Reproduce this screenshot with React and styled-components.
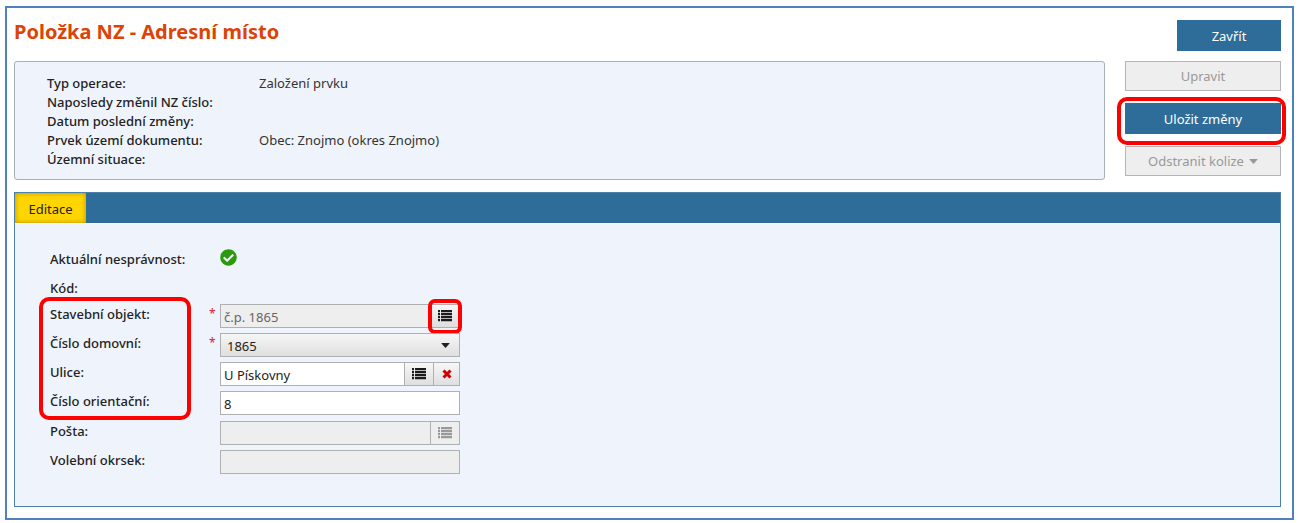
import React from 'react'
import styled, { createGlobalStyle, css } from 'styled-components'
import { FaCheckCircle } from 'react-icons/fa'

const GlobalStyle = createGlobalStyle`
	*, *::before, *::after {
		box-sizing: border-box;
	}
	body {
		margin: 0;
		background: #fff;
		color: #222;
		font: 13px/20px 'Noto Sans', 'Open Sans', sans-serif;
	}
	button, input, select {
		font: inherit;
	}
`

const Frame = styled.main`
	margin: 6px 6px 4px 5px;
	padding: 12px 11px 11px 7px;
	border: 2px solid #4f81bd;
`

const Header = styled.header`
	display: flex;
	justify-content: space-between;
	margin-bottom: 10px;
`

const Title = styled.h1`
	margin: 0;
	color: #dc4405;
	font-size: 20px;
	font-weight: 700;
	line-height: 24px;
`

const Overview = styled.section`
	display: flex;
	gap: 20px;
	margin-bottom: 12px;
`

const Summary = styled.dl`
	flex: 1;
	display: grid;
	grid-template-columns: 212px 1fr;
	grid-auto-rows: 19px;
	margin: 0;
	padding: 12px 32px 10px;
	border: 1px solid #a8b0b8;
	border-radius: 3px;
	background: #eff4fc;
	line-height: 19px;
`

const Term = styled.dt`
	font-weight: 500;
`

const Value = styled.dd`
	margin: 0;
	color: #333;
`

const Actions = styled.div`
	display: flex;
	flex-direction: column;
	gap: 12px;
	width: 156px;
`

/* red marker drawn around the thing being explained */
const marker = css`
	content: '';
	position: absolute;
	border: 4px solid #f00;
	border-radius: 10px;
	pointer-events: none;
`

const Marked = styled.div`
	position: relative;
	display: grid;
	&::after {
		${marker}
		inset: -6px -5px -11px -8px;
	}
`

const Button = styled.button`
	display: flex;
	align-items: center;
	justify-content: center;
	gap: 5px;
	width: ${props => (props.$small ? '104px' : '100%')};
	height: 31px;
	padding: 0;
	border: 1px solid #2e6d99;
	background: #2e6d99;
	color: #fff;
	&:disabled {
		height: 30px;
		border-color: #b5b5b5;
		background: #eee;
		color: #999;
	}
`

const Panel = styled.section`
	border: 1px solid #4a82aa;
	background: #eff4fc;
`

const TabBar = styled.div`
	display: flex;
	height: 31px;
	border-bottom: 1px solid #fff;
	background: #2e6d99;
`

const Tab = styled.button`
	width: 71px;
	padding: 1px 0 0;
	border: 0;
	background: #ffd500;
	box-shadow: inset 0 0 5px #b08f00;
	color: #222;
`

const Form = styled.form`
	display: flex;
	flex-direction: column;
	gap: 5px;
	padding: 25px 35px 32px;
`

const MarkedRows = styled.div`
	position: relative;
	display: flex;
	flex-direction: column;
	gap: 5px;
	margin-bottom: 1px;
	&::before {
		${marker}
		top: -7px;
		bottom: -5px;
		left: -11px;
		width: 152px;
	}
`

const Row = styled.div`
	display: grid;
	grid-template-columns: 159px 11px 240px;
	min-height: ${props => (props.$short ? '21px' : '24px')};
`

const Label = styled.label`
	font-weight: 500;
`

const Required = styled.span`
	color: #d2232a;
	font-size: 12px;
`

const Control = styled.div`
	position: relative;
	display: flex;
	height: 24px;
	border: 1px solid #aeb0b2;
	background: ${props => (props.$disabled ? '#eee' : '#fff')};
`

const Input = styled.input`
	flex: 1;
	min-width: 0;
	padding: 1px 3px 0;
	border: 0;
	background: transparent;
	color: #222;
	&:disabled {
		color: #666;
	}
`

const Select = styled.select`
	flex: 1;
	appearance: none;
	padding: 2px 6px 0;
	border: 0;
	border-radius: 0;
	background: linear-gradient(#f6f6f6, #dfdfdf);
	color: #222;
`

const SelectCaret = styled.span`
	position: absolute;
	top: 9px;
	right: 9px;
	display: flex;
	pointer-events: none;
`

const IconButton = styled.button`
	position: relative;
	display: flex;
	align-items: center;
	justify-content: center;
	width: ${props => (props.$narrow ? '26px' : '29px')};
	padding: 0;
	border: 0;
	border-left: 1px solid #aeb0b2;
	background: linear-gradient(#f6f6f6, #dfdfdf);
	color: #1b1b1b;
	&:disabled {
		background: #eee;
		color: #999;
	}
	${props =>
		props.$marked &&
		css`
			&::after {
				${marker}
				inset: -6px -3px -7px;
				border-radius: 7px;
			}
		`};
`

const StatusIcon = styled(FaCheckCircle)`
	width: 17px;
	height: 17px;
	color: #2b9a0b;
`

const ListIcon = () => (
	<svg width="14" height="12" viewBox="0 0 14 12" fill="currentColor" aria-hidden="true">
		{[0, 3, 6, 9].map(y => (
			<path key={y} d={`M0 ${y}h2v2.3H0zM3 ${y}h11v2.3H3z`} />
		))}
	</svg>
)

const CaretIcon = () => (
	<svg width="9" height="5" viewBox="0 0 9 5" fill="currentColor" aria-hidden="true">
		<path d="M.8 0h7.4q.8 0 .3.6L5 4.6q-.5.5-1 0L.5.6Q0 0 .8 0z" />
	</svg>
)

const CrossIcon = () => (
	<svg width="10" height="10" viewBox="0 0 10 10" aria-hidden="true">
		<path d="M1.5 1.5l7 7M8.5 1.5l-7 7" stroke="#d00000" strokeWidth="3" />
	</svg>
)

const summary = [
	['Typ operace:', 'Založení prvku'],
	['Naposledy změnil NZ číslo:', ''],
	['Datum poslední změny:', ''],
	['Prvek území dokumentu:', 'Obec: Znojmo (okres Znojmo)'],
	['Územní situace:', '']
]

const Field = ({ id, label, required, disabled, children }) => (
	<Row>
		<Label htmlFor={id}>{label}</Label>
		<Required>{required && '*'}</Required>
		<Control $disabled={disabled}>{children}</Control>
	</Row>
)

export default function App() {
	return (
		<>
			<GlobalStyle />
			<Frame>
				<Header>
					<Title>Položka NZ - Adresní místo</Title>
					<Button type="button" $small>
						Zavřít
					</Button>
				</Header>
				<Overview>
					<Summary>
						{summary.map(([term, value]) => (
							<React.Fragment key={term}>
								<Term>{term}</Term>
								<Value>{value}</Value>
							</React.Fragment>
						))}
					</Summary>
					<Actions>
						<Button type="button" disabled>
							Upravit
						</Button>
						<Marked>
							<Button type="button">Uložit změny</Button>
						</Marked>
						<Button type="button" disabled>
							Odstranit kolize <CaretIcon />
						</Button>
					</Actions>
				</Overview>
				<Panel>
					<TabBar role="tablist">
						<Tab type="button" role="tab" aria-selected="true">
							Editace
						</Tab>
					</TabBar>
					<Form>
						<Row>
							<Label as="span">Aktuální nesprávnost:</Label>
							<span />
							<StatusIcon aria-label="V pořádku" />
						</Row>
						<Row $short>
							<Label as="span">Kód:</Label>
						</Row>
						<MarkedRows>
							<Field id="objekt" label="Stavební objekt:" required disabled>
								<Input id="objekt" defaultValue="č.p. 1865" disabled />
								<IconButton type="button" aria-label="Vybrat objekt" $marked>
									<ListIcon />
								</IconButton>
							</Field>
							<Field id="domovni" label="Číslo domovní:" required>
								<Select id="domovni">
									<option>1865</option>
								</Select>
								<SelectCaret>
									<CaretIcon />
								</SelectCaret>
							</Field>
							<Field id="ulice" label="Ulice:">
								<Input id="ulice" defaultValue="U Pískovny" />
								<IconButton type="button" aria-label="Vybrat ulici">
									<ListIcon />
								</IconButton>
								<IconButton type="button" aria-label="Smazat ulici" $narrow>
									<CrossIcon />
								</IconButton>
							</Field>
							<Field id="orientacni" label="Číslo orientační:">
								<Input id="orientacni" defaultValue="8" />
							</Field>
						</MarkedRows>
						<Field id="posta" label="Pošta:" disabled>
							<Input id="posta" disabled />
							<IconButton type="button" aria-label="Vybrat poštu" disabled>
								<ListIcon />
							</IconButton>
						</Field>
						<Field id="okrsek" label="Volební okrsek:" disabled>
							<Input id="okrsek" disabled />
						</Field>
					</Form>
				</Panel>
			</Frame>
		</>
	)
}
